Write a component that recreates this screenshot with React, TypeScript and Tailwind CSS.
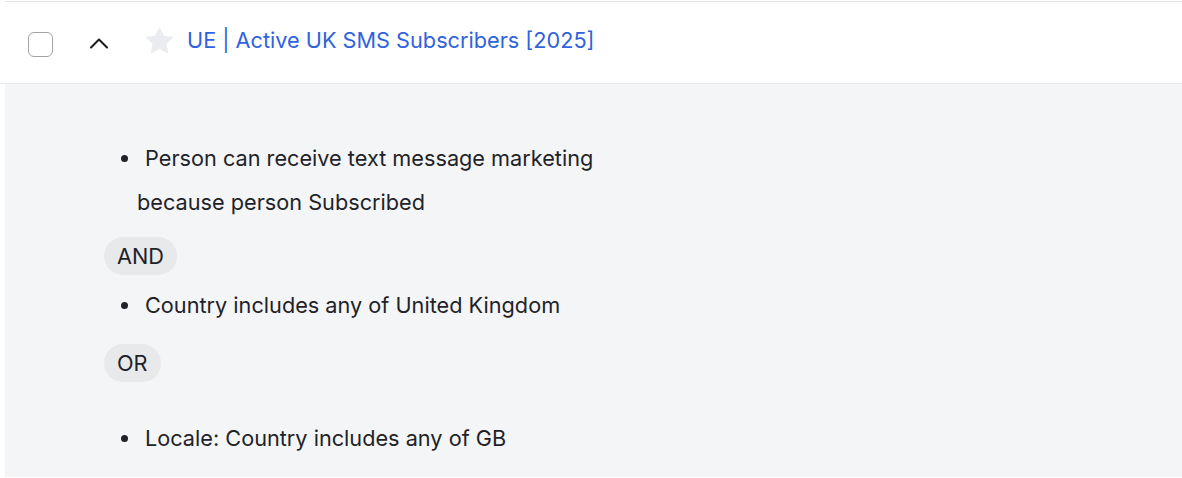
import React from 'react';

const font = { fontFamily: 'Inter, "Noto Sans", sans-serif' };

function Bullet({ children }: { children: React.ReactNode }) {
  return (
    <div className="flex items-center h-[44px]">
      <span className="ml-[116px] w-[7px] h-[7px] rounded-full bg-[#1f2328]" />
      <span className="ml-[17px]">{children}</span>
    </div>
  );
}

function Pill({ label }: { label: string }) {
  return (
    <div className="ml-[99px] inline-flex items-center h-[38px] px-[13px] rounded-full bg-[#e8e9eb]">
      {label}
    </div>
  );
}

// Segment row, expanded
export default function App() {
  return (
    <div className="w-[1182px] h-[478px] bg-white pl-[5px] pt-[1px]" style={font}>
      <div className="border-t border-[#e6e7e9]">
        <div className="h-[82px] flex items-center border-b border-[#e6e7e9] -ml-[5px] pl-[28px]">
          <span className="w-[25px] h-[25px] rounded-[6px] border border-[#a3a3a3] bg-white mt-[4px]" />
          <svg className="ml-[36px] mt-[1px]" width="20" height="12" viewBox="0 0 20 12" fill="none">
            <path d="M2 10.5L10 2.5L18 10.5" stroke="#1c1c1c" strokeWidth="2" strokeLinecap="round" strokeLinejoin="round" />
          </svg>
          <svg className="ml-[35px] -mt-[4px]" width="31" height="30" viewBox="0 0 24 24">
            <path
              d="M12 1.8l3.1 6.5 7 .9-5.2 4.9 1.4 7-6.3-3.5-6.3 3.5 1.4-7L1.9 9.2l7-.9z"
              fill="#ebecef"
              stroke="#ebecef"
              strokeWidth="1.2"
              strokeLinejoin="round"
            />
          </svg>
          <span className="ml-[12px] text-[21.7px] text-[#2f63de] -mt-[4px]">UE | Active UK SMS Subscribers [2025]</span>
        </div>
        <div className="h-[393px] bg-[#f4f5f7] pt-[52px] text-[21.7px] text-[#1f2328]">
          <Bullet>Person can receive text message marketing</Bullet>
          <div className="h-[44px] flex items-center pl-[132px]">because person Subscribed</div>
          <div className="mt-[13px]">
            <Pill label="AND" />
          </div>
          <div className="mt-[8px]">
            <Bullet>Country includes any of United Kingdom</Bullet>
          </div>
          <div className="mt-[17px]">
            <Pill label="OR" />
          </div>
          <div className="mt-[34px]">
            <Bullet>Locale: Country includes any of GB</Bullet>
          </div>
        </div>
      </div>
    </div>
  );
}
